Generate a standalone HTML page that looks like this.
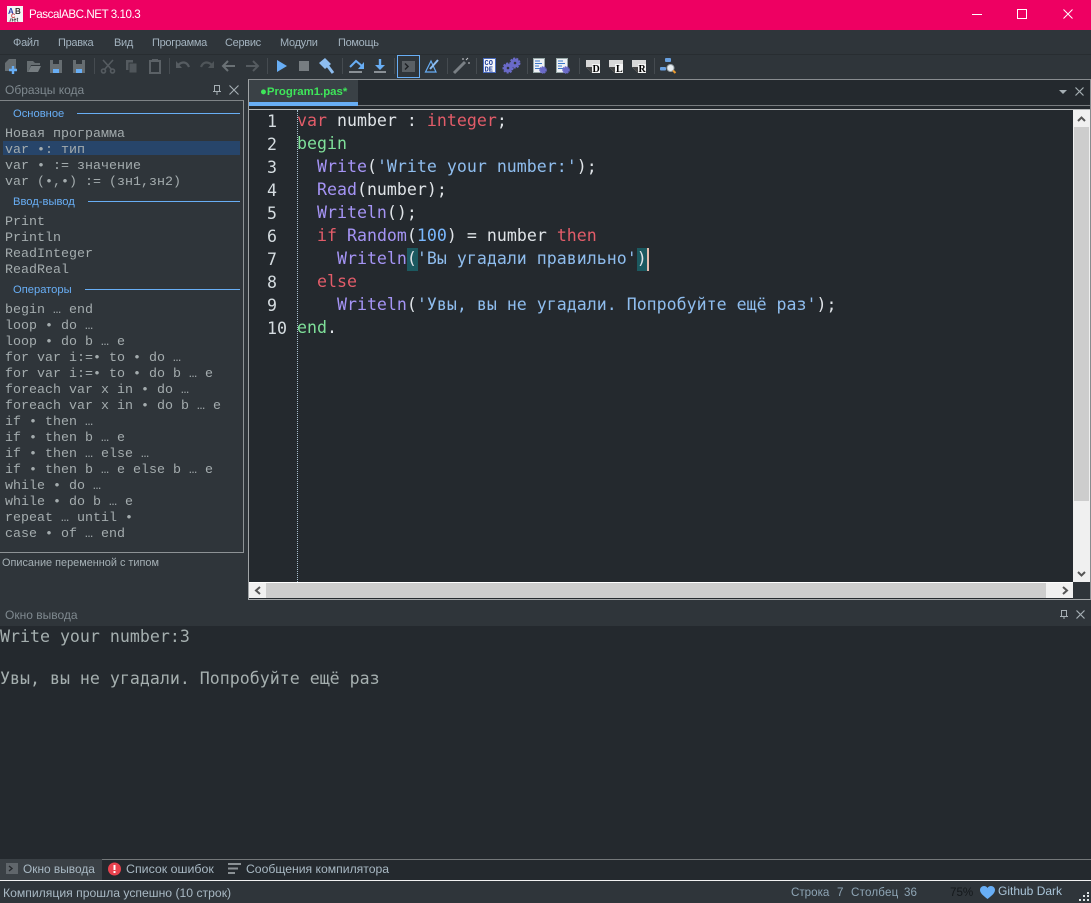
<!DOCTYPE html>
<html lang="ru">
<head>
<meta charset="utf-8">
<title>PascalABC.NET</title>
<style>
html,body{margin:0;padding:0;}
body{width:1091px;height:903px;overflow:hidden;background:#2f353a;position:relative;font-family:"Liberation Sans","Noto Sans CJK SC",sans-serif;}
.b{position:absolute;}
.t{position:absolute;white-space:pre;font-size:11.6px;line-height:16px;height:16px;}
.m{color:#a3b3bf;font-size:11px;letter-spacing:-.3px;}
.g{color:#7f898f;}
.h{color:#68aef5;font-size:11.2px;}
.l{position:absolute;left:5px;white-space:pre;font-family:"Liberation Mono",monospace;font-size:13.33px;line-height:16px;height:16px;color:#a4acae;}
.c{position:absolute;left:297px;white-space:pre;font-family:"DejaVu Sans Mono",monospace;font-size:16.6px;line-height:23px;height:23px;color:#dfe3e7;}
.n{position:absolute;left:267px;white-space:pre;font-family:"DejaVu Sans Mono",monospace;font-size:16.6px;line-height:23px;height:23px;color:#d5dce0;}
.o{position:absolute;left:0;white-space:pre;font-family:"DejaVu Sans Mono",monospace;font-size:16.6px;line-height:21px;height:21px;color:#a5afaf;}
.k{color:#e25c69;}.e{color:#7fe09a;}.f{color:#a594f5;}.s{color:#8fbdee;}.d{color:#79b8ff;}
svg{position:absolute;left:0;top:0;}
</style>
</head>
<body>
<!-- backgrounds -->
<div class="b" style="left:0;top:0;width:1091px;height:30px;background:#ee0062;"></div>
<div class="b" style="left:0;top:54px;width:1091px;height:1px;background:#282d31;"></div>
<!-- left panel frame -->
<div class="b" style="left:0;top:100px;width:244px;height:453px;box-sizing:border-box;border-top:1px solid #7f8487;border-right:1px solid #8d9295;border-bottom:1px solid #8d9295;"></div>
<div class="b" style="left:3px;top:141px;width:237px;height:14px;background:#27456a;"></div>
<!-- editor frame -->
<div class="b" style="left:248px;top:79px;width:843px;height:521px;box-sizing:border-box;background:#24292e;border-top:1px solid #888c8f;border-left:1px solid #a0a4a6;border-right:1px solid #888c8f;border-bottom:1px solid #a5a8aa;"></div>
<div class="b" style="left:249px;top:80px;width:109px;height:22px;background:#3a4146;"></div>
<div class="b" style="left:249px;top:102px;width:109px;height:4px;background:#68aef5;"></div>
<div class="b" style="left:358px;top:105px;width:732px;height:1px;background:#777b7e;"></div>
<div class="b" style="left:249px;top:109px;width:841px;height:1px;background:#b5b8ba;"></div>
<div class="b" style="left:297px;top:110px;width:0;height:472px;border-left:1px dotted #a8c0d0;"></div>
<!-- bracket highlights -->
<div class="b" style="left:407px;top:248px;width:11px;height:23px;background:#1c5960;"></div>
<div class="b" style="left:637px;top:248px;width:10px;height:23px;background:#1c5960;"></div>
<div class="b" style="left:647px;top:248px;width:2px;height:23px;background:#e5bdae;"></div>
<!-- scrollbars -->
<div class="b" style="left:1073px;top:110px;width:17px;height:472px;background:#f0f0f0;"></div>
<div class="b" style="left:1074px;top:127px;width:15px;height:374px;background:#cdcdcd;"></div>
<div class="b" style="left:249px;top:582px;width:824px;height:16px;background:#f0f0f0;border-top:1px solid #fff;box-sizing:border-box;"></div>
<div class="b" style="left:266px;top:583px;width:780px;height:15px;background:#cdcdcd;"></div>
<div class="b" style="left:1073px;top:582px;width:17px;height:17px;background:#2f353a;"></div>
<!-- output -->
<div class="b" style="left:0;top:626px;width:1091px;height:233px;background:#24292e;"></div>
<div class="b" style="left:0;top:859px;width:1091px;height:1px;background:#74787a;"></div>
<div class="b" style="left:0;top:860px;width:1091px;height:20px;background:#24292e;"></div>
<div class="b" style="left:0;top:859px;width:102px;height:21px;background:#3a4045;"></div>
<div class="b" style="left:0;top:880px;width:1091px;height:1px;background:#f2f2f2;"></div>

<!-- title -->
<div class="t" style="left:29px;top:7px;color:#fff;font-size:11.6px;letter-spacing:-.45px;">PascalABC.NET 3.10.3</div>
<!-- menu -->
<div class="t m" style="left:13px;top:35px;">Файл</div>
<div class="t m" style="left:58px;top:35px;">Правка</div>
<div class="t m" style="left:114px;top:35px;">Вид</div>
<div class="t m" style="left:152px;top:35px;">Программа</div>
<div class="t m" style="left:225px;top:35px;">Сервис</div>
<div class="t m" style="left:280px;top:35px;">Модули</div>
<div class="t m" style="left:338px;top:35px;">Помощь</div>

<!-- left panel -->
<div class="t g" style="left:5px;top:82px;font-size:12px;">Образцы кода</div>
<div class="t h" style="left:13px;top:106px;">Основное</div>
<div class="b" style="left:77px;top:113px;width:163px;height:1px;background:#68aef5;"></div>
<div class="t h" style="left:13px;top:194px;">Ввод-вывод</div>
<div class="b" style="left:88px;top:201px;width:152px;height:1px;background:#68aef5;"></div>
<div class="t h" style="left:13px;top:282px;">Операторы</div>
<div class="b" style="left:85px;top:289px;width:155px;height:1px;background:#68aef5;"></div>

<div class="l" style="top:127px;">Новая программа</div>
<div class="l" style="top:143px;">var •: тип</div>
<div class="l" style="top:159px;">var • := значение</div>
<div class="l" style="top:175px;">var (•,•) := (зн1,зн2)</div>
<div class="l" style="top:215px;">Print</div>
<div class="l" style="top:231px;">Println</div>
<div class="l" style="top:247px;">ReadInteger</div>
<div class="l" style="top:263px;">ReadReal</div>
<div class="l" style="top:303px;">begin … end</div>
<div class="l" style="top:319px;">loop • do …</div>
<div class="l" style="top:335px;">loop • do b … e</div>
<div class="l" style="top:351px;">for var i:=• to • do …</div>
<div class="l" style="top:367px;">for var i:=• to • do b … e</div>
<div class="l" style="top:383px;">foreach var x in • do …</div>
<div class="l" style="top:399px;">foreach var x in • do b … e</div>
<div class="l" style="top:415px;">if • then …</div>
<div class="l" style="top:431px;">if • then b … e</div>
<div class="l" style="top:447px;">if • then … else …</div>
<div class="l" style="top:463px;">if • then b … e else b … e</div>
<div class="l" style="top:479px;">while • do …</div>
<div class="l" style="top:495px;">while • do b … e</div>
<div class="l" style="top:511px;">repeat … until •</div>
<div class="l" style="top:527px;">case • of … end</div>
<div class="t" style="left:2px;top:555px;color:#a5b0b5;font-size:10.9px;">Описание переменной с типом</div>

<!-- tab -->
<div class="t" style="left:260px;top:84px;color:#3ee65a;font-weight:bold;font-size:11.4px;">●Program1.pas*</div>

<!-- line numbers -->
<div class="n" style="top:110px;">1</div>
<div class="n" style="top:133px;">2</div>
<div class="n" style="top:156px;">3</div>
<div class="n" style="top:179px;">4</div>
<div class="n" style="top:202px;">5</div>
<div class="n" style="top:225px;">6</div>
<div class="n" style="top:248px;">7</div>
<div class="n" style="top:271px;">8</div>
<div class="n" style="top:294px;">9</div>
<div class="n" style="top:317px;">10</div>

<!-- code -->
<div class="c" style="top:109px;"><span class="k">var</span> number : <span class="k">integer</span>;</div>
<div class="c" style="top:132px;"><span class="e">begin</span></div>
<div class="c" style="top:155px;">  <span class="f">Write</span>(<span class="s">'Write your number:'</span>);</div>
<div class="c" style="top:178px;">  <span class="f">Read</span>(number);</div>
<div class="c" style="top:201px;">  <span class="f">Writeln</span>();</div>
<div class="c" style="top:224px;">  <span class="k">if</span> <span class="f">Random</span>(<span class="d">100</span>) = number <span class="k">then</span></div>
<div class="c" style="top:247px;">    <span class="f">Writeln</span>(<span class="s">'Вы угадали правильно'</span>)</div>
<div class="c" style="top:270px;">  <span class="k">else</span></div>
<div class="c" style="top:293px;">    <span class="f">Writeln</span>(<span class="s">'Увы, вы не угадали. Попробуйте ещё раз'</span>);</div>
<div class="c" style="top:316px;"><span class="e">end</span>.</div>

<!-- output pane -->
<div class="t g" style="left:5px;top:607px;font-size:12px;">Окно вывода</div>
<div class="o" style="top:626px;">Write your number:3</div>
<div class="o" style="top:668px;">Увы, вы не угадали. Попробуйте ещё раз</div>

<!-- bottom tabs -->
<div class="t" style="left:23px;top:861px;color:#a9b9c4;font-size:11.9px;">Окно вывода</div>
<div class="t" style="left:126px;top:861px;color:#a9b9c4;font-size:12.4px;">Список ошибок</div>
<div class="t" style="left:246px;top:861px;color:#a9b9c4;font-size:12.2px;">Сообщения компилятора</div>

<!-- status -->
<div class="t" style="left:3px;top:885px;color:#a9b9c4;font-size:12.2px;">Компиляция прошла успешно (10 строк)</div>
<div class="t" style="left:791px;top:885px;color:#8ea5b5;">Строка</div>
<div class="t" style="left:837px;top:885px;color:#8ea5b5;">7</div>
<div class="t" style="left:851px;top:885px;color:#8ea5b5;font-size:11.6px;letter-spacing:.2px;">Столбец</div>
<div class="t" style="left:904px;top:885px;color:#8ea5b5;">36</div>
<div class="t" style="left:950px;top:885px;color:#14181b;">75%</div>
<div class="t" style="left:998px;top:883px;color:#a9c4d8;font-size:12px;">Github Dark</div>

<!-- icon overlay -->
<svg width="1091" height="903" viewBox="0 0 1091 903" fill="none">
  <!-- app icon -->
  <rect x="7" y="6" width="16" height="16" fill="#f4f4f4"/>
  <text x="8" y="14" font-family="Liberation Sans" font-size="8" font-weight="bold" fill="#2a3fa8">A</text>
  <text x="15" y="14" font-family="Liberation Sans" font-size="8" font-weight="bold" fill="#333">B</text>
  <text x="11" y="18" font-family="Liberation Sans" font-size="6" font-weight="bold" fill="#c93a3a">C</text>
  <text x="8.500" y="21.500" font-family="Liberation Sans" font-size="5.500" font-weight="bold" fill="#333">.net</text>

  <!-- window controls -->
  <path d="M972 14.5H982" stroke="#fff"/>
  <rect x="1017.5" y="9.5" width="9" height="9" stroke="#fff"/>
  <path d="M1063.5 9.5L1072.5 18.5M1072.5 9.5L1063.5 18.5" stroke="#fff"/>

  <!-- toolbar separators -->
  <g stroke="#454b50">
    <path d="M94.5 58V74M169.5 58V74M267.5 58V74M342.5 58V74M394.5 58V74M447.5 58V74M476.5 58V74M527.5 58V74M579.5 58V74M654.5 58V74"/>
  </g>

  <!-- new -->
  <path d="M5 63L9 59H16V71H5Z" fill="#666d71"/>
  <path d="M13 66V74M9 70H17" stroke="#68aef5" stroke-width="2.4"/>
  <!-- open -->
  <path d="M27 61H33L35 63H40V65H31L28 72H27Z" fill="#666d71"/>
  <path d="M31 66H41L38 72H28Z" fill="#767d81"/>
  <!-- save -->
  <path d="M50 60H62V73H50Z" fill="#666d71"/>
  <rect x="53" y="60" width="6" height="4" fill="#2f353a"/>
  <rect x="53" y="69" width="6" height="4" fill="#68aef5"/>
  <!-- save all -->
  <path d="M73 60H85V73H73Z" fill="#666d71"/>
  <rect x="76" y="60" width="6" height="4" fill="#2f353a"/>
  <rect x="76" y="69" width="6" height="4" fill="#68aef5"/>
  <!-- cut -->
  <g stroke="#555b60" stroke-width="1.6">
    <path d="M103 60L112 70M113 60L104 70"/>
    <circle cx="103.5" cy="71" r="2"/>
    <circle cx="112.5" cy="71" r="2"/>
  </g>
  <!-- copy -->
  <path d="M126 60H133V70H126Z" fill="#555b60"/>
  <path d="M129 63H137V73H129Z" fill="#50565b" stroke="#2f353a"/>
  <!-- paste -->
  <path d="M150 61H160V73H150Z" stroke="#5b6166" stroke-width="2"/>
  <rect x="152" y="59" width="6" height="3" fill="#5b6166"/>
  <!-- undo redo -->
  <path d="M178 65C183 61 187 62 189 67" stroke="#565c61" stroke-width="2.2"/>
  <path d="M176 61V68H182Z" fill="#565c61"/>
  <path d="M212 65C207 61 203 62 201 67" stroke="#4f5559" stroke-width="2.2"/>
  <path d="M214 61V68H208Z" fill="#4f5559"/>
  <!-- back forward -->
  <path d="M235 66H223M228 61L223 66L228 71" stroke="#6a7175" stroke-width="2"/>
  <path d="M246 66H258M253 61L258 66L253 71" stroke="#555b60" stroke-width="2"/>
  <!-- play stop hammer -->
  <path d="M277 60L287 66L277 72Z" fill="#68aef5"/>
  <rect x="299" y="61" width="10" height="10" fill="#777d81"/>
  <path d="M319 63L325 58L331 64L325 69Z" fill="#8dbdf0"/>
  <path d="M327 65L333 73" stroke="#8dbdf0" stroke-width="3"/>
  <!-- step over / into -->
  <path d="M350 67L356 61L362 66" stroke="#68aef5" stroke-width="2"/>
  <path d="M364 62V69H358Z" fill="#68aef5"/>
  <rect x="349" y="71" width="13" height="2" fill="#8a9095"/>
  <path d="M380 59V67" stroke="#68aef5" stroke-width="2.4"/>
  <path d="M375 65H385L380 70Z" fill="#68aef5"/>
  <rect x="374" y="71" width="12" height="2" fill="#8a9095"/>
  <!-- output toggle -->
  <rect x="397.5" y="55.5" width="22" height="22" stroke="#68aef5"/>
  <rect x="402" y="61" width="13" height="11" fill="#5a6065"/>
  <path d="M405 63.5L408 66.5L405 69.5" stroke="#1e2226" stroke-width="1.5"/>
  <!-- debug pencil -->
  <path d="M425.5 72L431 61L436 72Z" stroke="#68aef5" stroke-width="1.2"/>
  <path d="M430 69L438 60" stroke="#8dbdf0" stroke-width="2"/>
  <!-- wand -->
  <path d="M454 73L465 62" stroke="#7a8085" stroke-width="3"/>
  <path d="M463 60V58M468 63H470M466 60L468 58" stroke="#c8ccd0"/>
  <!-- code -->
  <rect x="483.500" y="58.500" width="12" height="14" fill="#f5f6fa" stroke="#4a6cc0"/>
  <text x="484.500" y="65" font-family="Liberation Mono" font-size="7" font-weight="bold" fill="#1f3f9a">CO</text>
  <text x="484.500" y="71.500" font-family="Liberation Mono" font-size="7" font-weight="bold" fill="#1f3f9a">DE</text>
  <!-- gears -->
  <circle cx="508" cy="68" r="4.500" fill="#6a6ac8" stroke="#6a6ac8" stroke-width="2" stroke-dasharray="2 1.200"/>
  <circle cx="515" cy="63" r="4.500" fill="#6a6ac8" stroke="#6a6ac8" stroke-width="2" stroke-dasharray="2 1.200"/>
  <circle cx="508" cy="68" r="1.300" fill="#2f353a"/>
  <circle cx="515" cy="63" r="1.300" fill="#2f353a"/>
  <!-- doc-gears -->
  <rect x="533.500" y="58.500" width="11" height="14" fill="#eef1f5" stroke="#9aa"/>
  <path d="M535 61H540M535 63.500H542M535 66H539M535 68.500H541" stroke="#3b78c9"/>
  <circle cx="543" cy="70" r="3" fill="#6a6ac8" stroke="#6a6ac8" stroke-width="1.600" stroke-dasharray="1.500 .6"/>
  <rect x="556.500" y="58.500" width="11" height="14" fill="#eef1f5" stroke="#9aa"/>
  <path d="M558 61H563M558 63.500H565M558 66H562M558 68.500H564" stroke="#3b78c9"/>
  <circle cx="566" cy="70" r="3" fill="#6a6ac8" stroke="#6a6ac8" stroke-width="1.600" stroke-dasharray="1.500 .6"/>
  <!-- D L R docs -->
  <path d="M586 60H600V73H592L586 67Z" fill="#d8d8d8"/>
  <path d="M586 67L592 73V67Z" fill="#444"/>
  <rect x="592" y="64" width="8" height="9" fill="#f5f5f5"/>
  <path d="M609 60H623V73H615L609 67Z" fill="#d8d8d8"/>
  <path d="M609 67L615 73V67Z" fill="#444"/>
  <rect x="615" y="64" width="8" height="9" fill="#f5f5f5"/>
  <path d="M632 60H646V73H638L632 67Z" fill="#d8d8d8"/>
  <path d="M632 67L638 73V67Z" fill="#444"/>
  <rect x="638" y="64" width="8" height="9" fill="#f5f5f5"/>
  <text x="592.500" y="72" font-family="Liberation Serif" font-size="10" font-weight="bold" fill="#000">D</text>
  <text x="616" y="72" font-family="Liberation Serif" font-size="10" font-weight="bold" fill="#000">L</text>
  <text x="638.500" y="72" font-family="Liberation Serif" font-size="10" font-weight="bold" fill="#000">R</text>
  <!-- structure -->
  <rect x="665" y="58" width="6" height="4" rx="1" fill="#68a0e0"/>
  <rect x="660" y="67" width="6" height="3.500" rx="1" fill="#68a0e0"/>
  <circle cx="670.500" cy="68" r="3.500" fill="#e8edf0" stroke="#9aa4aa"/>
  <path d="M673 70.500L675.500 73" stroke="#e89a30" stroke-width="2"/>

  <!-- panel pin / close (left) -->
  <path d="M214.5 85.5H219.5V91.5H214.5ZM213 91.5H221M217 92V95" stroke="#a6afb4"/>
  <path d="M229.5 85.5L238.5 94.5M238.5 85.5L229.5 94.5" stroke="#a6afb4" stroke-width="1.1"/>
  <!-- tab strip arrow / close -->
  <path d="M1059 90H1067L1063 94Z" fill="#a6afb4"/>
  <path d="M1075.5 87.5L1083.5 95.5M1083.5 87.5L1075.5 95.5" stroke="#a6afb4" stroke-width="1.2"/>
  <!-- output pin / close -->
  <path d="M1061.5 610.5H1066.5V616.5H1061.5ZM1060 616.5H1068M1064 617V619" stroke="#a6afb4"/>
  <path d="M1076.5 610.5L1084.5 618.5M1084.5 610.5L1076.5 618.5" stroke="#a6afb4" stroke-width="1.2"/>

  <!-- scrollbar arrows -->
  <path d="M1078 121L1081.500 117.500L1085 121" stroke="#555" stroke-width="2"/>
  <path d="M1078 572L1081.500 575.500L1085 572" stroke="#555" stroke-width="2"/>
  <path d="M260 587L256 590.500L260 594" stroke="#555" stroke-width="2"/>
  <path d="M1063 587L1067 590.500L1063 594" stroke="#555" stroke-width="2"/>

  <!-- bottom tab icons -->
  <rect x="6" y="863" width="12" height="11" fill="#60666b"/>
  <path d="M9 866L12 868.500L9 871" stroke="#25292d" stroke-width="1.4"/>
  <circle cx="114.500" cy="869" r="6.500" fill="#e8424e"/>
  <rect x="113.500" y="865" width="2" height="5" fill="#fff"/>
  <rect x="113.500" y="871" width="2" height="2" fill="#fff"/>
  <path d="M228 864H241M228 868.500H238M228 873H235" stroke="#8b9195" stroke-width="2"/>

  <!-- heart -->
  <path d="M987.500 899C983 895.500 980 893 980 890C980 887.500 982 886 984 886C985.500 886 986.800 886.800 987.500 888C988.200 886.800 989.500 886 991 886C993 886 995 887.500 995 890C995 893 992 895.500 987.500 899Z" fill="#68aef5"/>
  <!-- grip -->
  <g fill="#dfe3e5">
    <rect x="1087" y="892" width="2" height="2"/>
    <rect x="1083" y="895" width="2" height="2"/>
    <rect x="1087" y="895" width="2" height="2"/>
    <rect x="1079" y="899" width="2" height="2"/>
    <rect x="1083" y="899" width="2" height="2"/>
    <rect x="1087" y="899" width="2" height="2"/>
  </g>
</svg>
</body>
</html>
